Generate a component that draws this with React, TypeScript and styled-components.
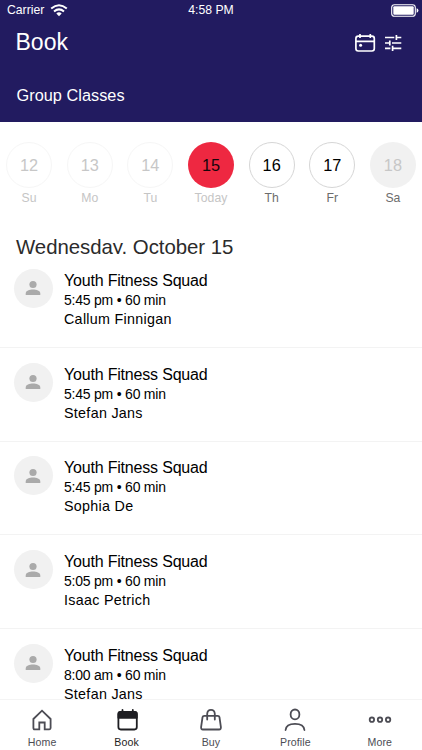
import React from "react";
import styled, { createGlobalStyle, css } from "styled-components";

const GlobalStyle = createGlobalStyle`
  * { box-sizing: border-box; }
  body {
    margin: 0;
    background: #fff;
    color: #000;
    font-family: "Liberation Sans", Arial, sans-serif;
  }
`;

const Screen = styled.div`
  display: flex;
  flex-direction: column;
  width: 422px;
  height: 750px;
  overflow: hidden;
  background: #fff;
`;

const Header = styled.header`
  flex: none;
  height: 122px;
  background: #221b60;
  color: #fff;
`;

const StatusBar = styled.div`
  display: grid;
  grid-template-columns: 1fr auto 1fr;
  align-items: center;
  height: 20px;
  padding: 0 3px 0 7px;
  font-size: 12.2px;
  line-height: 19px;
`;

const Carrier = styled.div`
  display: flex;
  align-items: center;
  gap: 6px;
`;

const Clock = styled.div`
  padding-right: 4px;
`;

const Battery = styled.svg`
  justify-self: end;
`;

const TitleBar = styled.div`
  display: flex;
  align-items: center;
  height: 45px;
  padding: 0 19px 0 15.5px;
`;

const Title = styled.h1`
  flex: 1;
  margin: 0;
  font-size: 23px;
  font-weight: 400;
  line-height: 45px;
`;

const Actions = styled.div`
  display: flex;
  align-items: center;
  gap: 7px;
`;

const Category = styled.div`
  padding: 19px 16.5px 0;
  font-size: 16.3px;
  line-height: 22px;
  letter-spacing: 0.03px;
`;

const Week = styled.div`
  flex: none;
  display: grid;
  grid-template-columns: repeat(7, 60.65px);
  justify-content: center;
  height: 113px;
  padding-top: 20px;
`;

type DayKind = "past" | "today" | "open" | "closed";

const Day = styled.div`
  display: flex;
  flex-direction: column;
  align-items: center;
`;

const dayStyles = {
  past: css`
    border: 1px solid #f6f6f6;
    color: #c7c7c7;
  `,
  today: css`
    background: #ee2841;
    color: #16050a;
  `,
  open: css`
    border: 1px solid #d6d6d6;
    color: #000;
  `,
  closed: css`
    background: #f1f1f1;
    color: #c7c7c7;
  `,
};

const DayNumber = styled.div<{ $kind: DayKind }>`
  display: flex;
  align-items: center;
  justify-content: center;
  width: 46px;
  height: 46px;
  border-radius: 50%;
  font-size: 16.3px;
  ${({ $kind }) => dayStyles[$kind]}
`;

const DayName = styled.div<{ $muted: boolean }>`
  margin-top: 3px;
  font-size: 12.2px;
  line-height: 15px;
  letter-spacing: 0.1px;
  color: ${({ $muted }) => ($muted ? "#c5c5c5" : "#6c6c6c")};
`;

const DateHeading = styled.h2`
  flex: none;
  height: 19px;
  margin: 0;
  padding-left: 16px;
  overflow: hidden;
  font-size: 20.4px;
  font-weight: 400;
  line-height: 24px;
  letter-spacing: -0.03px;
  color: #2b2b2b;
`;

const ClassList = styled.div`
  flex: 1;
  min-height: 0;
  overflow: hidden;
`;

const ClassRow = styled.article`
  display: flex;
  gap: 11px;
  height: 93.75px;
  padding: 14.8px 13.5px 0;
  border-bottom: 1px solid #f3f3f3;
`;

const Avatar = styled.div`
  display: flex;
  align-items: center;
  justify-content: center;
  width: 39px;
  height: 39px;
  border-radius: 50%;
  background: #f1f1f1;
`;

const Details = styled.div`
  padding: 1px 0 0 0.5px;
`;

const ClassName = styled.div`
  font-size: 16px;
  line-height: 21px;
  letter-spacing: -0.19px;
`;

const ClassTime = styled.div`
  font-size: 14px;
  line-height: 19px;
  letter-spacing: -0.22px;
`;

const Teacher = styled.div`
  font-size: 14.3px;
  line-height: 19px;
  letter-spacing: 0.3px;
`;

const TabBar = styled.nav`
  flex: none;
  display: grid;
  grid-template-columns: repeat(5, 1fr);
  height: 51px;
  border-top: 1px solid #f4f4f4;
  background: #fff;
`;

const Tab = styled.div<{ $active?: boolean }>`
  display: flex;
  flex-direction: column;
  align-items: center;
  padding-top: 8px;
  font-size: 10.6px;
  line-height: 14px;
  letter-spacing: 0.1px;
  color: ${({ $active }) => ($active ? "#1e1e22" : "#4c4c54")};
`;

const TabIcon = styled.svg`
  flex: none;
  width: 26px;
  height: 24px;
  margin-bottom: 3px;
  fill: none;
  stroke: currentColor;
  stroke-width: 1.8;
  stroke-linejoin: round;
  stroke-linecap: round;
`;

const days: { number: number; name: string; kind: DayKind }[] = [
  { number: 12, name: "Su", kind: "past" },
  { number: 13, name: "Mo", kind: "past" },
  { number: 14, name: "Tu", kind: "past" },
  { number: 15, name: "Today", kind: "today" },
  { number: 16, name: "Th", kind: "open" },
  { number: 17, name: "Fr", kind: "open" },
  { number: 18, name: "Sa", kind: "closed" },
];

const classes = [
  { time: "5:45 pm", teacher: "Callum Finnigan" },
  { time: "5:45 pm", teacher: "Stefan Jans" },
  { time: "5:45 pm", teacher: "Sophia De" },
  { time: "5:05 pm", teacher: "Isaac Petrich" },
  { time: "8:00 am", teacher: "Stefan Jans" },
];

const tabs = [
  {
    label: "Home",
    icon: (
      <path
        d="M4.400 11 13 2.700l8.600 8.300v9.100q0 1.200-1.200 1.200h-4.700v-6.800h-5.400v6.800H5.600q-1.200 0-1.200-1.200z"
        strokeLinejoin="miter"
      />
    ),
  },
  {
    label: "Book",
    active: true,
    icon: (
      <>
        <rect x="4.400" y="4" width="18.400" height="17.500" rx="2.400" />
        <path d="M4.400 9.800V6.400q0-2.400 2.400-2.400h13.600q2.400 0 2.400 2.400v3.400zM8.500 2v2M18.800 2v2" fill="currentColor" />
      </>
    ),
  },
  {
    label: "Buy",
    icon: (
      <>
        <path d="M6.300 7.800h13.400q1.500 0 1.800 1.500l1.400 9.900q.2 2.300-1.800 2.300H4.900q-2 0-1.800-2.300l1.400-9.900q.3-1.500 1.800-1.500z" />
        <path d="M9.200 11.500V5.700Q9.400 1.800 13 1.800t3.800 3.900v5.800" />
      </>
    ),
  },
  {
    label: "Profile",
    icon: (
      <>
        <ellipse cx="13" cy="6.400" rx="4.400" ry="4.900" />
        <path d="M3.600 22c.3-4 3.700-6.200 9.400-6.200s9.100 2.200 9.400 6.200" />
      </>
    ),
  },
  {
    label: "More",
    icon: (
      <>
        <circle cx="4.900" cy="11.700" r="2.200" />
        <circle cx="13" cy="11.700" r="2.200" />
        <circle cx="21.100" cy="11.700" r="2.200" />
      </>
    ),
  },
];

export default function App() {
  return (
    <Screen>
      <GlobalStyle />
      <Header>
        <StatusBar>
          <Carrier>
            <span>Carrier</span>
            <svg width="18" height="13" viewBox="0 0 18 13" fill="none" stroke="#fff" strokeWidth="2">
              <path d="M1.200 4.500Q9-2.100 16.800 4.500M4 7.500Q9 3.300 14 7.500" />
              <path d="M6.300 9.400Q9 7.300 11.700 9.400L9 12.300z" fill="#fff" stroke="none" />
            </svg>
          </Carrier>
          <Clock>4:58 PM</Clock>
          <Battery width="28" height="13" viewBox="0 0 28 13">
            <rect x="0.700" y="0.700" width="23.600" height="11.600" rx="2.800" fill="none" stroke="#fff" strokeWidth="1.100" />
            <rect x="2.300" y="2.300" width="20.400" height="8.400" rx="1" fill="#fff" />
            <path d="M25.600 4.200q1.800.5 1.800 2.300t-1.800 2.300z" fill="#fff" />
          </Battery>
        </StatusBar>
        <TitleBar>
          <Title>Book</Title>
          <Actions>
            <svg width="22" height="20" viewBox="0 0 22 20" fill="none" stroke="#fff" strokeWidth="1.700">
              <rect x="1.900" y="3.200" width="18.400" height="14.800" rx="2.400" />
              <path d="M1.900 8.300h18.400M6 1v4M16.300 1v4" />
              <circle cx="6.600" cy="12.200" r="1.500" fill="#fff" stroke="none" />
            </svg>
            <svg width="20" height="20" viewBox="0 0 20 20" fill="none" stroke="#fff" strokeWidth="1.700">
              <path d="M2 4.500h9.300M13.400 4.500h4.900M13.400 1.900v5.200M2 10h4.800M9 10h9.300M6.800 7.400v5.200M2 15.300h5.400M9.600 15.300h8.700M9.600 12.700v5.200" />
            </svg>
          </Actions>
        </TitleBar>
        <Category>Group Classes</Category>
      </Header>
      <Week>
        {days.map((day) => (
          <Day key={day.number}>
            <DayNumber $kind={day.kind}>{day.number}</DayNumber>
            <DayName $muted={day.kind === "past" || day.kind === "today"}>{day.name}</DayName>
          </Day>
        ))}
      </Week>
      <DateHeading>Wednesday, October 15</DateHeading>
      <ClassList>
        {classes.map((item, index) => (
          <ClassRow key={index}>
            <Avatar>
              <svg width="16" height="16" viewBox="0 0 16 16" fill="#aaa">
                <circle cx="8" cy="4.500" r="3.600" />
                <path d="M.7 15v-1.500C.7 10.700 4.500 9.600 8 9.600s7.300 1.100 7.300 3.900V15z" />
              </svg>
            </Avatar>
            <Details>
              <ClassName>Youth Fitness Squad</ClassName>
              <ClassTime>{item.time} • 60 min</ClassTime>
              <Teacher>{item.teacher}</Teacher>
            </Details>
          </ClassRow>
        ))}
      </ClassList>
      <TabBar>
        {tabs.map((tab) => (
          <Tab key={tab.label} $active={tab.active}>
            <TabIcon viewBox="0 0 26 24">{tab.icon}</TabIcon>
            {tab.label}
          </Tab>
        ))}
      </TabBar>
    </Screen>
  );
}
